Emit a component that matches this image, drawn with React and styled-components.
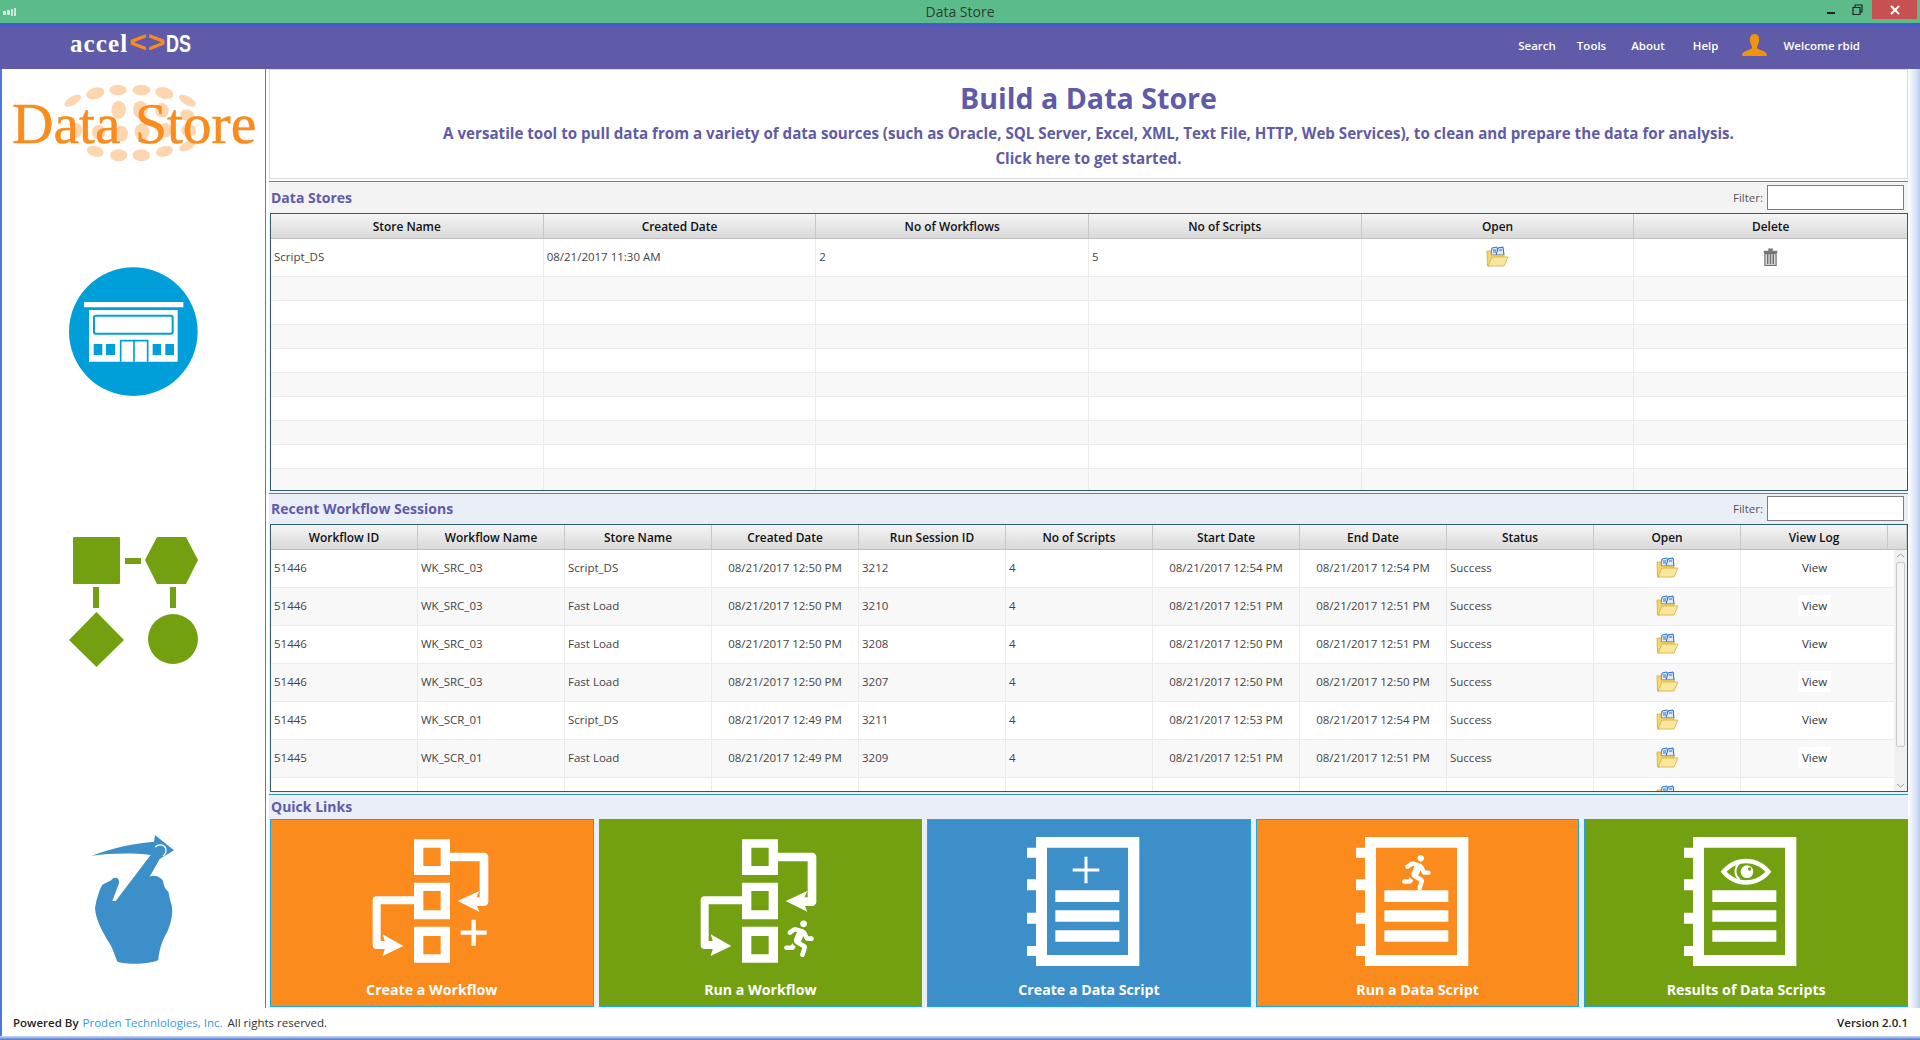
import React from 'react';
import styled, { createGlobalStyle } from 'styled-components';
import { FaRunning } from 'react-icons/fa';

const GlobalStyle = createGlobalStyle`
  html, body {
    margin: 0;
    padding: 0;
    background: #fff;
    overflow: hidden;
  }
  * {
    box-sizing: border-box;
  }
`;

const FONT = '"Open Sans", "Noto Sans", sans-serif';
const PURPLE = '#5f5ba8';

// Window chrome
const Shell = styled.div`
  width: 1920px;
  height: 1040px;
  display: flex;
  flex-direction: column;
  font-family: ${FONT};
  background: #fff;
  overflow: hidden;
`;

const TitleBar = styled.div`
  height: 23px;
  flex: none;
  background: #5bbb8b;
  display: flex;
  align-items: center;
  justify-content: space-between;
  padding: 0 3px 0 2px;
  position: relative;
`;

const WindowTitle = styled.span`
  position: absolute;
  left: 0;
  right: 0;
  top: 2px;
  text-align: center;
  font-size: 14px;
  line-height: 19px;
  color: #2f3d36;
`;

const WindowButtons = styled.div`
  display: flex;
  align-items: flex-start;
  height: 100%;
`;

const WindowBtn = styled.div`
  width: ${(p) => p.$w}px;
  height: 19px;
  display: flex;
  align-items: center;
  justify-content: center;
  background: ${(p) => p.$bg || 'transparent'};
`;

const TopNav = styled.header`
  height: 46px;
  flex: none;
  background: ${PURPLE};
  border-top: 4px solid #4a5bc6;
  display: flex;
  align-items: center;
  justify-content: space-between;
  padding: 0 60px 8px 70px;
`;

const Brand = styled.div`
  display: flex;
  align-items: baseline;
  color: #fff;
  line-height: 26px;
  margin-top: -3px;
`;

const BrandName = styled.span`
  font-family: "Liberation Serif", serif;
  font-weight: 700;
  font-size: 25px;
  letter-spacing: 1.1px;
`;

const BrandMark = styled.span`
  font-family: "Liberation Sans", sans-serif;
  font-weight: 700;
  font-size: 30px;
  line-height: 26px;
  color: #f98a1c;
  letter-spacing: 1px;
  margin-left: 1px;
`;

const BrandSuffix = styled.span`
  font-family: "Liberation Sans", sans-serif;
  font-weight: 700;
  font-size: 24px;
  transform: scaleX(0.75);
  transform-origin: left;
`;

const NavLinks = styled.nav`
  display: flex;
  align-items: center;
`;

const NavLink = styled.a`
  font-size: 11.5px;
  font-weight: 600;
  color: #fff;
  margin-left: ${(p) => p.$gap}px;
  margin-top: 2px;
`;

const UserIcon = styled.svg`
  width: 25px;
  height: 22px;
  margin-left: 24px;
  margin-top: 1px;
`;

// Page body
const Body = styled.div`
  flex: 1;
  min-height: 0;
  display: flex;
  border-left: 2px solid #4c78dd;
`;

const Sidebar = styled.aside`
  width: 264px;
  flex: none;
  border-right: 1px solid #3a8fb5;
  display: flex;
  flex-direction: column;
  align-items: center;
`;

const Logo = styled.div`
  width: 263px;
  height: 100px;
  margin-top: 3px;
  position: relative;
`;

const LogoDots = styled.svg`
  width: 266px;
  height: 100px;
  display: block;
`;

const LogoText = styled.span`
  position: absolute;
  left: 10px;
  top: 20px;
  font-family: "Liberation Serif", serif;
  font-size: 57.5px;
  line-height: 64px;
  color: #fb8b1c;
  -webkit-text-stroke: 0.5px #fb8b1c;
  white-space: nowrap;
`;

const StoreIcon = styled.svg`
  width: 150px;
  height: 145px;
  margin-top: 88px;
  margin-left: 3px;
`;

const FlowIcon = styled.svg`
  width: 130px;
  height: 130px;
  margin-top: 132px;
`;

const HandIcon = styled.svg`
  width: 110px;
  height: 145px;
  margin-top: 158px;
  margin-left: 1px;
`;

const Main = styled.main`
  width: 1639px;
  flex: none;
  margin-left: 3px;
  display: flex;
  flex-direction: column;
`;

const RightEdge = styled.div`
  flex: 1;
  background: linear-gradient(90deg, #fff, #dbe6f8 60%, #b9cdf2);
`;

const Banner = styled.section`
  height: 110px;
  flex: none;
  margin-bottom: 2px;
  background: #fff;
  border: 1px solid #dcdcdc;
  text-align: center;
  color: ${PURPLE};
  font-weight: 700;
`;

const BannerTitle = styled.h1`
  margin: 8px 0 0;
  font-size: 28.6px;
  line-height: 40px;
  font-weight: 700;
`;

const BannerLine = styled.p`
  margin: 0;
  font-size: 15.15px;
  line-height: 25px;
  &:first-of-type {
    margin-top: 3px;
  }
`;

const Section = styled.section`
  height: ${(p) => p.$h}px;
  flex: none;
  display: flex;
  flex-direction: column;
  background: ${(p) => p.$bg};
  border-top: 1px solid #3f93a8;
`;

const SectionHead = styled.div`
  height: ${(p) => p.$h}px;
  flex: none;
  display: flex;
  align-items: center;
  justify-content: space-between;
  padding: 0 4px ${(p) => p.$lift || 0}px 2px;
`;

const SectionTitle = styled.h2`
  margin: 0;
  font-size: 14px;
  font-weight: 700;
  color: ${PURPLE};
`;

const Filter = styled.label`
  display: flex;
  align-items: center;
  gap: 4px;
  font-size: 11.5px;
  color: #555;
`;

const FilterInput = styled.input`
  width: 137px;
  height: 25px;
  background: #fff;
  border: 1px solid #7d7d7d;
  outline: none;
`;

const TableFrame = styled.div`
  flex: none;
  height: ${(p) => p.$h}px;
  margin-left: 1px;
  border: 1px solid #2c5f6e;
  background: #fff;
  display: flex;
  flex-direction: column;
  overflow: hidden;
`;

const HeadRow = styled.div`
  height: 25px;
  flex: none;
  display: grid;
  grid-template-columns: ${(p) => p.$cols};
  background: linear-gradient(#f5f5f5, #d9d9d9);
  border-bottom: 1px solid #bdbdbd;
`;

const HeadCell = styled.div`
  display: flex;
  align-items: center;
  justify-content: center;
  font-size: 11.9px;
  font-weight: 600;
  color: #111;
  border-right: 1px solid #c8c8c8;
  &:last-child {
    border-right: ${(p) => (p.$open ? '1px solid #c8c8c8' : 'none')};
  }
`;

const TableBody = styled.div`
  flex: 1;
  min-height: 0;
  display: flex;
`;

const Rows = styled.div`
  flex: 1;
  min-width: 0;
  overflow: hidden;
`;

const Row = styled.div`
  height: ${(p) => p.$h}px;
  display: grid;
  grid-template-columns: ${(p) => p.$cols};
  background: ${(p) => (p.$odd ? '#f8f8f8' : '#fff')};
  border-bottom: 1px solid #ebebeb;
`;

const Cell = styled.div`
  display: flex;
  align-items: center;
  justify-content: ${(p) => (p.$center ? 'center' : 'flex-start')};
  padding: 0 0 2px ${(p) => (p.$center ? 0 : 3)}px;
  font-size: 11.5px;
  color: #444;
  white-space: nowrap;
  border-right: ${(p) => (p.$plain ? 'none' : '1px solid #ebebeb')};
`;

const ViewLink = styled.span`
  background: #fff;
  color: #333;
  padding: 3px 4px;
`;

const Scrollbar = styled.div`
  width: 13px;
  flex: none;
  background: #f0f0f0;
  display: flex;
  flex-direction: column;
  align-items: center;
  justify-content: space-between;
`;

const ScrollArrow = styled.svg`
  width: 9px;
  height: 12px;
  flex: none;
`;

const ScrollThumb = styled.div`
  width: 9px;
  height: 185px;
  margin-bottom: 32px;
  border: 1px solid #c9c9c9;
  border-radius: 2px;
  background: #f4f4f4;
`;

const QuickRow = styled.div`
  height: 188px;
  flex: none;
  margin-left: 1px;
  display: grid;
  grid-template-columns: repeat(5, 1fr);
  column-gap: 5px;
`;

const QuickCard = styled.a`
  display: flex;
  flex-direction: column;
  align-items: center;
  padding-top: 11px;
  background: ${(p) => p.$bg};
  border: 1px solid #1ca6e3;
  color: #fff;
  font-size: 14.2px;
  font-weight: 700;
`;

const CardIcon = styled.svg`
  width: 140px;
  height: 140px;
  flex: none;
`;

const CardLabel = styled.span`
  margin-top: 9px;
  line-height: 20px;
`;

const Footer = styled.footer`
  height: 28px;
  flex: none;
  display: flex;
  align-items: center;
  justify-content: space-between;
  padding: 0 12px 0 11px;
  font-size: 11.5px;
  color: #333;
  border-left: 2px solid #4c78dd;
`;

const FooterStrong = styled.b`
  color: #222;
  font-weight: 600;
`;

const FooterLink = styled.a`
  color: #2d9ae6;
  margin: 0 5px 0 4px;
`;

const BottomEdge = styled.div`
  height: 4px;
  flex: none;
  background: linear-gradient(#cfdcf6, #4a74d8);
`;

const CellGlyph = styled.svg`
  margin-left: ${(p) => p.$nudge || 0}px;
`;

// Drawings
const FolderIcon = () => (
  <CellGlyph $nudge={1} width="23" height="21" viewBox="0 0 23 21">
    <path d="M5 9 L6 2 L11 1 L12 9Z" fill="#e9f1fc" stroke="#2f78d8" strokeWidth="1" />
    <path d="M10 9 L12 2 L17 1 L18 9Z" fill="#dfe9fa" stroke="#1f66cf" strokeWidth="1" />
    <path d="M7 4 h3 M13 4 h3 M7 6 h3" stroke="#1f66cf" strokeWidth="1.2" />
    <path d="M1 5 L5 5 L5 9 L18 9 L18 12 L3 20 L1.5 20Z" fill="#f4d674" stroke="#cfa93f" strokeWidth="0.8" />
    <path d="M2 20 L6 11 L22 11 L18 20Z" fill="#fbe79c" stroke="#d2ac44" strokeWidth="0.8" />
  </CellGlyph>
);

const TrashIcon = () => (
  <CellGlyph width="15" height="18" viewBox="0.5 0.500 13 16">
    <path d="M5 1 h4 v2 h-4z M1 3 h12 v2 h-12z" fill="#777" />
    <path d="M2 5.5 h10 v10.5 h-10z" fill="#dcdcdc" stroke="#6f6f6f" strokeWidth="1" />
    <path d="M4.500 6 v9 M7 6 v9 M9.500 6 v9" stroke="#6f6f6f" strokeWidth="1.3" />
  </CellGlyph>
);

const logoDots = [
  [212, 86, 28, 13, -30], [280, 64, 28, 17, -15], [348, 54, 26, 16, 0], [418, 54, 27, 16, 0],
  [487, 63, 28, 17, 15], [556, 86, 28, 13, 30], [350, 113, 22, 27, 0], [415, 113, 22, 27, 0],
  [480, 115, 20, 22, 0], [556, 130, 22, 17, 20], [225, 175, 15, 22, 0], [290, 180, 20, 22, 0],
  [358, 185, 20, 24, 0], [420, 180, 22, 26, 0], [490, 175, 20, 22, 0], [560, 175, 22, 20, 0],
  [280, 238, 26, 16, 15], [350, 250, 26, 18, 0], [418, 250, 26, 18, 0], [487, 238, 26, 16, -15],
  [556, 222, 26, 12, -25],
];

const WorkflowIcon = ({ children }) => (
  <CardIcon viewBox="6 0 420 420">
    <path
      fillRule="evenodd"
      fill="#fff"
      d="M162 25h108v107h-108z M190 50v55h52v-55z M162 155h108v110h-108z M190 180v58h52v-58z M162 287h108v108h-108z M190 315v55h52v-55z"
    />
    <path d="M270 78 H372 V212 H340" fill="none" stroke="#fff" strokeWidth="26" strokeLinejoin="round" />
    <path d="M293 210 L358 180 L345 210 L358 242Z" fill="#fff" />
    <path d="M162 208 H50 V342 H80" fill="none" stroke="#fff" strokeWidth="24" strokeLinejoin="round" />
    <path d="M130 345 L68 310 L78 342 L68 375Z" fill="#fff" />
    {children}
  </CardIcon>
);

const NotebookIcon = ({ children }) => (
  <CardIcon viewBox="-9 0 420 420">
    <path
      fillRule="evenodd"
      fill="#fff"
      d="M42 18H352V405H42V375H15V345H42V278H15V245H42V178H15V145H42V80H15V50H42Z M75 50V372H318V50Z"
    />
    <path d="M100 178h192v35h-192z M100 238h192v34h-192z M100 298h192v34h-192z" fill="#fff" />
    {children}
  </CardIcon>
);

const PlusMark = ({ x, y, len, thick }) => (
  <path
    fill="#fff"
    d={`M${x - thick / 2} ${y - len / 2}h${thick}v${len}h${-thick}z M${x - len / 2} ${y - thick / 2}h${len}v${thick}h${-len}z`}
  />
);

const EyeMark = ({ bg }) => (
  <g>
    <path d="M125 122 C165 70 237 70 277 122 C237 174 165 174 125 122Z" fill="#fff" />
    <path d="M143 122 C175 88 227 88 259 122 C227 156 175 156 143 122Z" fill={bg} />
    <circle cx="204" cy="122" r="19" fill="#fff" />
    <circle cx="212" cy="114" r="5" fill={bg} />
    <path d="M180 98 A30 30 0 0 0 183 146" fill="none" stroke="#fff" strokeWidth="6" />
  </g>
);

const storeCols = 'repeat(6, 1fr)';
const sessionCols = 'repeat(11, 147px) 1fr';
const sessionBodyCols = 'repeat(11, 147px)';

const storeHeads = ['Store Name', 'Created Date', 'No of Workflows', 'No of Scripts', 'Open', 'Delete'];
const sessionHeads = ['Workflow ID', 'Workflow Name', 'Store Name', 'Created Date', 'Run Session ID', 'No of Scripts', 'Start Date', 'End Date', 'Status', 'Open', 'View Log'];

const sessions = [
  ['51446', 'WK_SRC_03', 'Script_DS', '08/21/2017 12:50 PM', '3212', '08/21/2017 12:54 PM', '08/21/2017 12:54 PM'],
  ['51446', 'WK_SRC_03', 'Fast Load', '08/21/2017 12:50 PM', '3210', '08/21/2017 12:51 PM', '08/21/2017 12:51 PM'],
  ['51446', 'WK_SRC_03', 'Fast Load', '08/21/2017 12:50 PM', '3208', '08/21/2017 12:50 PM', '08/21/2017 12:51 PM'],
  ['51446', 'WK_SRC_03', 'Fast Load', '08/21/2017 12:50 PM', '3207', '08/21/2017 12:50 PM', '08/21/2017 12:50 PM'],
  ['51445', 'WK_SCR_01', 'Script_DS', '08/21/2017 12:49 PM', '3211', '08/21/2017 12:53 PM', '08/21/2017 12:54 PM'],
  ['51445', 'WK_SCR_01', 'Fast Load', '08/21/2017 12:49 PM', '3209', '08/21/2017 12:51 PM', '08/21/2017 12:51 PM'],
];

const navItems = [
  { label: 'Search', gap: 0 },
  { label: 'Tools', gap: 21 },
  { label: 'About', gap: 25 },
  { label: 'Help', gap: 28 },
];

const App = () => (
  <Shell>
    <GlobalStyle />
    <TitleBar>
      <svg width="16" height="14" viewBox="0 0 16 14">
        <path d="M1 6h3v4h-3z M5 5h3v5h-3z M9 4h2v7h-2z M12 3h2v8h-2z" fill="#cfe9da" />
      </svg>
      <WindowTitle>Data Store</WindowTitle>
      <WindowButtons>
        <WindowBtn $w={22}>
          <svg width="10" height="10" viewBox="0 0 10 10"><path d="M1 7h8v2h-8z" fill="#222" /></svg>
        </WindowBtn>
        <WindowBtn $w={30}>
          <svg width="11" height="12" viewBox="0 0 11 12"><path d="M3 3V1h7v7H8 M1 3.500h7v7h-7z" fill="none" stroke="#222" strokeWidth="1.2" /></svg>
        </WindowBtn>
        <WindowBtn $w={45} $bg="#c75050">
          <svg width="10" height="10" viewBox="0 0 10 10"><path d="M1 1L9 9M9 1L1 9" stroke="#fff" strokeWidth="2" /></svg>
        </WindowBtn>
      </WindowButtons>
    </TitleBar>

    <TopNav>
      <Brand>
        <BrandName>accel</BrandName>
        <BrandMark>&lt;&gt;</BrandMark>
        <BrandSuffix>DS</BrandSuffix>
      </Brand>
      <NavLinks>
        {navItems.map((item) => (
          <NavLink key={item.label} $gap={item.gap}>{item.label}</NavLink>
        ))}
        <UserIcon viewBox="0 0 25 22">
          <path d="M12.500 0 C16 0 17.500 3 17 7 C16.600 10 15 12 15 13.500 C15 15.500 20 16 23 18 C24.500 19 25 20.500 25 22 H0 C0 20.500 .5 19 2 18 C5 16 10 15.500 10 13.500 C10 12 8.400 10 8 7 C7.500 3 9 0 12.500 0Z" fill="#f0940f" />
        </UserIcon>
        <NavLink $gap={16}>Welcome rbid</NavLink>
      </NavLinks>
    </TopNav>

    <Body>
      <Sidebar>
        <Logo>
          <LogoDots viewBox="0 0 798 300">
            {logoDots.map(([cx, cy, rx, ry, rot]) => (
              <ellipse
                key={`${cx}-${cy}`}
                cx={cx}
                cy={cy}
                rx={rx}
                ry={ry}
                fill="#fdd6b0"
                transform={`rotate(${rot} ${cx} ${cy})`}
              />
            ))}
          </LogoDots>
          <LogoText>Data Store</LogoText>
        </Logo>

        <StoreIcon viewBox="0 0 450 435">
          <circle cx="220" cy="215" r="193" fill="#009fda" />
          <path d="M72 126h298v16h-298z M87 150h266v155h-266z" fill="#fff" />
          <rect x="102" y="167" width="236" height="54" rx="5" fill="#fff" stroke="#009fda" strokeWidth="6" />
          <path d="M101 252h26v33h-26z M138 252h27v33h-27z M278 252h25v33h-25z M316 252h26v33h-26z" fill="#009fda" />
          <path d="M182 305V242H263V305 M222 242V305" fill="none" stroke="#009fda" strokeWidth="5" />
        </StoreIcon>

        <FlowIcon viewBox="69 537 130 130">
          <g fill="#72a011">
            <rect x="73" y="537" width="47" height="47" rx="1" />
            <rect x="125" y="558" width="16" height="6" />
            <path d="M145 560 L157 537 H186 L198 560 L186 584 H157Z" />
            <rect x="93" y="587" width="6" height="21" />
            <rect x="170" y="587" width="6" height="21" />
            <path d="M96.500 612 L124 640 L96.500 667 L69 640Z" />
            <ellipse cx="173" cy="639" rx="25" ry="25" />
          </g>
        </FlowIcon>

        <HandIcon viewBox="0 0 330 435">
          <path
            fill="#3d8fca"
            d="M38 92 C100 68 170 54 225 50 L228 30 L285 76 L242 102 L212 155 C225 148 245 155 252 168 C255 185 258 190 268 200 C272 215 272 225 278 240 C282 265 278 290 265 320 C250 345 240 375 238 405 C210 418 150 420 115 410 C105 385 100 365 85 345 C65 310 50 280 48 250 C52 225 60 195 70 180 C85 170 95 170 102 160 C112 155 122 160 120 175 L100 228 L110 228 L215 90 C160 84 100 84 38 92Z"
          />
          <path d="M229 66 C238 56 256 58 260 70 C263 80 258 90 252 93" fill="none" stroke="#fff" strokeWidth="4" />
        </HandIcon>
      </Sidebar>

      <Main>
        <Banner>
          <BannerTitle>Build a Data Store</BannerTitle>
          <BannerLine>A versatile tool to pull data from a variety of data sources (such as Oracle, SQL Server, Excel, XML, Text File, HTTP, Web Services), to clean and prepare the data for analysis.</BannerLine>
          <BannerLine>Click here to get started.</BannerLine>
        </Banner>

        <Section $h={312} $bg="#f3f3f3">
          <SectionHead $h={31}>
            <SectionTitle>Data Stores</SectionTitle>
            <Filter>Filter:<FilterInput /></Filter>
          </SectionHead>
          <TableFrame $h={278}>
            <HeadRow $cols={storeCols}>
              {storeHeads.map((h) => <HeadCell key={h}>{h}</HeadCell>)}
            </HeadRow>
            <Rows>
              <Row $h={38} $cols={storeCols}>
                <Cell>Script_DS</Cell>
                <Cell>08/21/2017 11:30 AM</Cell>
                <Cell>2</Cell>
                <Cell>5</Cell>
                <Cell $center><FolderIcon /></Cell>
                <Cell $center $plain><TrashIcon /></Cell>
              </Row>
              {Array.from({ length: 9 }, (_, i) => (
                <Row key={i} $h={24} $cols={storeCols} $odd={i % 2 === 0}>
                  {storeHeads.map((h, j) => <Cell key={h} $plain={j === 5} />)}
                </Row>
              ))}
            </Rows>
          </TableFrame>
        </Section>

        <Section $h={301} $bg="#eaeff7">
          <SectionHead $h={30} $lift={1}>
            <SectionTitle>Recent Workflow Sessions</SectionTitle>
            <Filter>Filter:<FilterInput /></Filter>
          </SectionHead>
          <TableFrame $h={268}>
            <HeadRow $cols={sessionCols}>
              {sessionHeads.map((h) => <HeadCell key={h}>{h}</HeadCell>)}
              <HeadCell $open />
            </HeadRow>
            <TableBody>
              <Rows>
                {sessions.map((s, i) => (
                  <Row key={s[4]} $h={38} $cols={sessionBodyCols} $odd={i % 2 === 1}>
                    <Cell>{s[0]}</Cell>
                    <Cell>{s[1]}</Cell>
                    <Cell>{s[2]}</Cell>
                    <Cell $center>{s[3]}</Cell>
                    <Cell>{s[4]}</Cell>
                    <Cell>4</Cell>
                    <Cell $center>{s[5]}</Cell>
                    <Cell $center>{s[6]}</Cell>
                    <Cell>Success</Cell>
                    <Cell $center><FolderIcon /></Cell>
                    <Cell $center $plain><ViewLink>View</ViewLink></Cell>
                  </Row>
                ))}
                <Row $h={38} $cols={sessionBodyCols}>
                  <Cell /><Cell /><Cell /><Cell /><Cell /><Cell /><Cell /><Cell /><Cell />
                  <Cell $center><FolderIcon /></Cell>
                  <Cell $center $plain />
                </Row>
              </Rows>
              <Scrollbar>
                <ScrollArrow viewBox="0 0 9 12"><path d="M1 7L4.500 4L8 7" fill="none" stroke="#9a9a9a" strokeWidth="1" /></ScrollArrow>
                <ScrollThumb />
                <ScrollArrow viewBox="0 0 9 12"><path d="M1 5L4.500 8L8 5" fill="none" stroke="#9a9a9a" strokeWidth="1" /></ScrollArrow>
              </Scrollbar>
            </TableBody>
          </TableFrame>
        </Section>

        <Section $h={214} $bg="#eaeff7">
          <SectionHead $h={24} $lift={2}>
            <SectionTitle>Quick Links</SectionTitle>
          </SectionHead>
          <QuickRow>
            <QuickCard $bg="#fb8b1c">
              <WorkflowIcon><PlusMark x={341} y={305} len={78} thick={13} /></WorkflowIcon>
              <CardLabel>Create a Workflow</CardLabel>
            </QuickCard>
            <QuickCard $bg="#72a011">
              <WorkflowIcon><FaRunning x={278} y={268} size={110} color="#fff" /></WorkflowIcon>
              <CardLabel>Run a Workflow</CardLabel>
            </QuickCard>
            <QuickCard $bg="#3d8fca">
              <NotebookIcon><PlusMark x={192} y={117} len={80} thick={9} /></NotebookIcon>
              <CardLabel>Create a Data Script</CardLabel>
            </QuickCard>
            <QuickCard $bg="#fb8b1c">
              <NotebookIcon><FaRunning x={143} y={72} size={106} color="#fff" /></NotebookIcon>
              <CardLabel>Run a Data Script</CardLabel>
            </QuickCard>
            <QuickCard $bg="#72a011">
              <NotebookIcon><EyeMark bg="#72a011" /></NotebookIcon>
              <CardLabel>Results of Data Scripts</CardLabel>
            </QuickCard>
          </QuickRow>
        </Section>
      </Main>
      <RightEdge />
    </Body>

    <Footer>
      <span>
        <FooterStrong>Powered By</FooterStrong>
        <FooterLink>Proden Technlologies, Inc.</FooterLink>
        All rights reserved.
      </span>
      <FooterStrong>Version 2.0.1</FooterStrong>
    </Footer>
    <BottomEdge />
  </Shell>
);

export default App;
